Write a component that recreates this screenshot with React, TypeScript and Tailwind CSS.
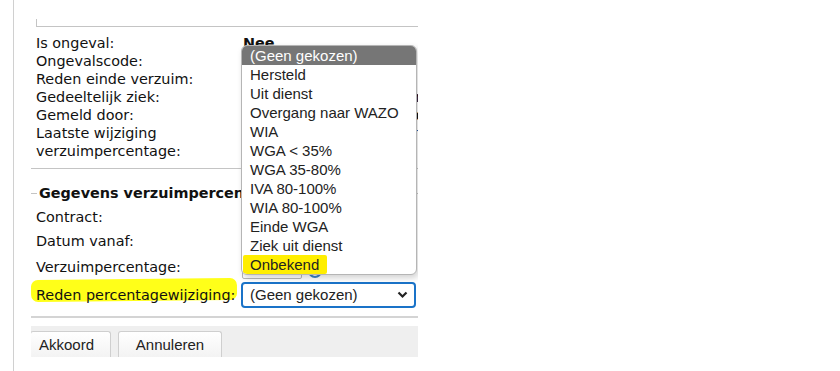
import React from "react";

const labelFont = { fontFamily: '"DejaVu Sans", Verdana, sans-serif' };

const options = [
  "(Geen gekozen)",
  "Hersteld",
  "Uit dienst",
  "Overgang naar WAZO",
  "WIA",
  "WGA < 35%",
  "WGA 35-80%",
  "IVA 80-100%",
  "WIA 80-100%",
  "Einde WGA",
  "Ziek uit dienst",
  "Onbekend",
];

function Row({ label, value, bold }: { label: React.ReactNode; value?: string; bold?: boolean }) {
  return (
    <div className="flex">
      <div className="w-[207px] shrink-0">{label}</div>
      <div className={"whitespace-nowrap " + (bold ? "font-bold" : "")}>{value}</div>
    </div>
  );
}

export default function App() {
  return (
    <div className="w-[840px] h-[371px] bg-white overflow-hidden flex font-['Liberation_Sans',Arial,sans-serif]">
      <div className="w-[13px] shrink-0" />
      <div className="border-l border-[#d0d0d0] pl-[17px] h-full">
        <div className="relative w-[387px] h-full overflow-hidden text-[14.4px] leading-[18px] text-[#111]" style={labelFont}>
          {/* end of previous fieldset */}
          <div className="pt-[19px] pl-[5px]">
            <div className="h-[8px] border-l border-b border-[#c4c4c4]" />
          </div>

          <div className="pl-[5px] pt-[7px]">
            <Row label="Is ongeval:" value="Nee" bold />
            <Row label="Ongevalscode:" value="" />
            <Row label="Reden einde verzuim:" value="" />
            <Row label="Gedeeltelijk ziek:" value="Ja, gedeeltelijk arbeidsongeschikt" />
            <Row label="Gemeld door:" value="Werknemer zelf via de applicatie" bold />
            <Row
              label={
                <>
                  Laatste wijziging
                  <br />
                  verzuimpercentage:
                </>
              }
              value="01-01-2024 door de werkgever (HR) E"
            />
          </div>

          <div className="mt-[8px] border-t border-[#c4c4c4]" />

          {/* second fieldset */}
          <div className="mt-[24px] border-t border-[#c4c4c4] relative">
            <div className="absolute left-[6px] top-[-10px] bg-white px-[2px] font-bold whitespace-nowrap">
              Gegevens verzuimpercentage
            </div>
          </div>
          <div className="pl-[5px] pt-[14px]">
            <div className="h-[18px] flex">
              <div className="w-[207px]">Contract:</div>
            </div>
            <div className="h-[18px] mt-[6px] flex">
              <div className="w-[207px]">Datum vanaf:</div>
            </div>
            <div className="mt-[7px] flex items-center h-[20px]">
              <div className="w-[206px]">Verzuimpercentage:</div>
              <div className="w-[60px] h-[20px] border border-[#b8b8b8] rounded-[2px] mt-[4px]" />
              <div className="ml-[6px] w-[14px] h-[14px] rounded-full border-2 border-[#3b82c4] mt-[8px]" />
            </div>
            <div className="mt-[5px] flex items-center relative">
              <div className="absolute left-[-5px] top-[-3px] w-[206px] h-[22px] bg-[#ffff00] rounded-[7px] -rotate-[0.6deg] opacity-90" />
              <div className="relative w-[205px] whitespace-nowrap">Reden percentagewijziging:</div>
              <div
                className="relative w-[175px] h-[26px] border-2 border-[#1a73c8] rounded-[4px] bg-white flex items-center pl-[7px] pr-[6px] text-[15px] text-[#222]"
                style={{ fontFamily: '"Liberation Sans", Arial, sans-serif' }}
              >
                <span className="flex-1">(Geen gekozen)</span>
                <svg width="11" height="8" viewBox="0 0 11 8">
                  <path d="M1.5 1.5 L5.5 5.5 L9.5 1.5" stroke="#222" strokeWidth="2.2" fill="none" />
                </svg>
              </div>
            </div>
          </div>

          <div className="mt-[8px] border-t-2 border-[#d4d4d4]" />

          {/* button bar */}
          <div
            className="mt-[8px] h-[31px] bg-[#efefef] flex items-end gap-[7px] text-[15px] text-[#222]"
            style={{ fontFamily: '"Liberation Sans", Arial, sans-serif' }}
          >
            <div className="h-[26px] w-[81px] -ml-[1px] border border-b-0 border-[#cfcfcf] rounded-t-[3px] bg-gradient-to-b from-white to-[#f3f3f3] flex items-center pl-[8px]">
              Akkoord
            </div>
            <div className="h-[26px] w-[104px] border border-b-0 border-[#cfcfcf] rounded-t-[3px] bg-gradient-to-b from-white to-[#f3f3f3] flex items-center justify-center">
              Annuleren
            </div>
          </div>

          {/* open dropdown list */}
          <div
            className="absolute left-[210px] top-[45px] w-[176px] h-[230px] bg-white border border-[#b5b5b5] rounded-[6px] shadow-[2px_3px_6px_rgba(0,0,0,0.18)] overflow-hidden text-[15px] leading-[19px] text-[#222] pt-0"
            style={{ fontFamily: '"Liberation Sans", Arial, sans-serif' }}
          >
            {options.map((o, i) => (
              <div
                key={o}
                className={
                  "h-[19px] pl-[8px] whitespace-nowrap " +
                  (i === 0 ? "bg-[#767676] text-white" : "")
                }
              >
                {o === "Onbekend" ? (
                  <span className="bg-[#ffee00] inline-block -ml-[7px] pl-[7px] pr-[8px] rounded-[2px]">{o}</span>
                ) : (
                  o
                )}
              </div>
            ))}
          </div>
        </div>
      </div>
    </div>
  );
}
